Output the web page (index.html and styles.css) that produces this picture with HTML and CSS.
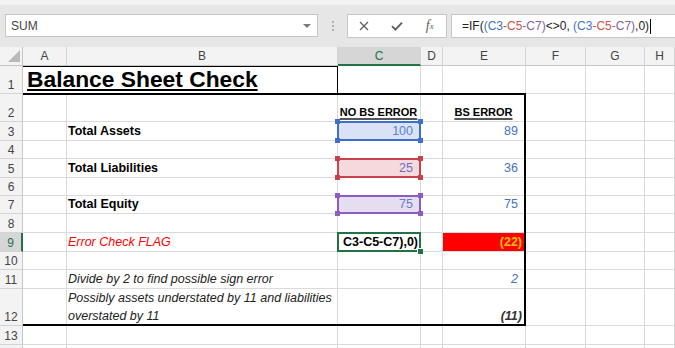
FILE: index.html
```html
<!DOCTYPE html>
<html lang="en">
  <head>
    <meta charset="UTF-8" />
    <title>Balance Sheet Check</title>
    <link rel="stylesheet" href="styles.css">
  </head>
  <body>
    <div class="top-strip"></div>
    <div class="formula-bar">
      <div class="name-box">
        <span>SUM</span>
        <span class="caret-down"></span>
      </div>
      <div class="grip"><i></i><i></i><i></i></div>
      <div class="fx-buttons">
        <span class="fx-slot">
          <svg width="10" height="10" viewBox="0 0 10 10"><path d="M1 1L9 9M9 1L1 9" stroke="#5f5f5f" stroke-width="1.3" fill="none" /></svg>
        </span>
        <span class="fx-slot">
          <svg width="12" height="10" viewBox="0 0 12 10"><path d="M1 5.2L4.4 8.6L11 1.6" stroke="#5f5f5f" stroke-width="1.9" fill="none" /></svg>
        </span>
        <span class="fx-slot fx-label">f<sub>x</sub></span>
      </div>
      <div class="formula-input">
        <span class="formula">=IF(<span class="ref-1">(C3</span><span class="ref-2">-C5</span><span class="ref-3">-C7)</span>&lt;&gt;0, <span class="ref-1">(C3</span><span class="ref-2">-C5</span><span class="ref-3">-C7)</span>,0)</span><span class="text-caret"></span>
      </div>
    </div>

    <div class="sheet">
      <div class="cells">
        <!-- header -->
        <div class="corner">
          <svg width="12" height="12" viewBox="0 0 12 12"><path d="M12 0L12 12L0 12Z" fill="#b9b9b9" /></svg>
        </div>
        <div class="col-head">A</div>
        <div class="col-head">B</div>
        <div class="col-head selected">C</div>
        <div class="col-head">D</div>
        <div class="col-head">E</div>
        <div class="col-head">F</div>
        <div class="col-head">G</div>
        <div class="col-head">H</div>

        <!-- row 1 -->
        <div class="row-head">1</div>
        <div class="cell title wide">Balance Sheet Check</div>
        <div class="cell"></div><div class="cell"></div><div class="cell"></div>
        <div class="cell"></div><div class="cell"></div><div class="cell"></div>

        <!-- row 2 -->
        <div class="row-head">2</div>
        <div class="cell"></div><div class="cell"></div>
        <div class="cell heading">NO BS ERROR</div>
        <div class="cell"></div>
        <div class="cell heading">BS ERROR</div>
        <div class="cell"></div><div class="cell"></div><div class="cell"></div>

        <!-- row 3 -->
        <div class="row-head">3</div>
        <div class="cell"></div>
        <div class="cell label">Total Assets</div>
        <div class="cell num pos range range-blue">100</div>
        <div class="cell"></div>
        <div class="cell num pos">89</div>
        <div class="cell"></div><div class="cell"></div><div class="cell"></div>

        <!-- row 4 -->
        <div class="row-head">4</div>
        <div class="cell"></div><div class="cell"></div><div class="cell"></div><div class="cell"></div>
        <div class="cell"></div><div class="cell"></div><div class="cell"></div><div class="cell"></div>

        <!-- row 5 -->
        <div class="row-head">5</div>
        <div class="cell"></div>
        <div class="cell label">Total Liabilities</div>
        <div class="cell num pos range range-red">25</div>
        <div class="cell"></div>
        <div class="cell num pos">36</div>
        <div class="cell"></div><div class="cell"></div><div class="cell"></div>

        <!-- row 6 -->
        <div class="row-head">6</div>
        <div class="cell"></div><div class="cell"></div><div class="cell"></div><div class="cell"></div>
        <div class="cell"></div><div class="cell"></div><div class="cell"></div><div class="cell"></div>

        <!-- row 7 -->
        <div class="row-head">7</div>
        <div class="cell"></div>
        <div class="cell label">Total Equity</div>
        <div class="cell num pos range range-purple">75</div>
        <div class="cell"></div>
        <div class="cell num pos">75</div>
        <div class="cell"></div><div class="cell"></div><div class="cell"></div>

        <!-- row 8 -->
        <div class="row-head">8</div>
        <div class="cell"></div><div class="cell"></div><div class="cell"></div><div class="cell"></div>
        <div class="cell"></div><div class="cell"></div><div class="cell"></div><div class="cell"></div>

        <!-- row 9 -->
        <div class="row-head selected">9</div>
        <div class="cell"></div>
        <div class="cell flag-label">Error Check FLAG</div>
        <div class="cell num active"><span>C3-C5-C7),0)</span></div>
        <div class="cell"></div>
        <div class="cell num flag">(22)</div>
        <div class="cell"></div><div class="cell"></div><div class="cell"></div>

        <!-- row 10 -->
        <div class="row-head">10</div>
        <div class="cell"></div><div class="cell"></div><div class="cell"></div><div class="cell"></div>
        <div class="cell"></div><div class="cell"></div><div class="cell"></div><div class="cell"></div>

        <!-- row 11 -->
        <div class="row-head">11</div>
        <div class="cell"></div>
        <div class="cell note">Divide by 2 to find possible sign error</div>
        <div class="cell"></div><div class="cell"></div>
        <div class="cell num pos note-num">2</div>
        <div class="cell"></div><div class="cell"></div><div class="cell"></div>

        <!-- row 12 -->
        <div class="row-head">12</div>
        <div class="cell"></div>
        <div class="cell note two-lines"><span>Possibly assets understated by 11 and liabilities<br>overstated by 11</span></div>
        <div class="cell"></div><div class="cell"></div>
        <div class="cell num neg-note">(11)</div>
        <div class="cell"></div><div class="cell"></div><div class="cell"></div>

        <!-- row 13 -->
        <div class="row-head">13</div>
        <div class="cell"></div><div class="cell"></div><div class="cell"></div><div class="cell"></div>
        <div class="cell"></div><div class="cell"></div><div class="cell"></div><div class="cell"></div>

        <!-- row 14 (only its top edge is in view) -->
        <div class="row-head"></div>
        <div class="cell"></div><div class="cell"></div><div class="cell"></div><div class="cell"></div>
        <div class="cell"></div><div class="cell"></div><div class="cell"></div><div class="cell"></div>
      </div>

      <!-- cell borders drawn on top of the grid -->
      <div class="frames">
        <div class="frame-title"></div>
        <div class="frame-main"></div>
      </div>
    </div>
  </body>
</html>
```

FILE: styles.css
```css
body {
  margin: 0;
  width: 675px;
  height: 348px;
  overflow: hidden;
  background: #fff;
  font-family: "Liberation Sans", Arial, sans-serif;
  color: #000;
}
.top-strip {
  height: 5px;
  background: #f3f3f3;
}
.formula-bar {
  height: 42px;
  box-sizing: border-box;
  padding-top: 9px;
  background: #e6e6e6;
  display: flex;
  align-items: flex-start;
}
.name-box {
  margin-left: 5px;
  width: 313px;
  height: 23px;
  box-sizing: border-box;
  background: #fff;
  border: 1px solid #c6c6c6;
  display: flex;
  align-items: center;
  justify-content: space-between;
  padding: 0 6px 0 5px;
  font-size: 12px;
  color: #444;
}
.caret-down {
  width: 0;
  height: 0;
  border-left: 4px solid transparent;
  border-right: 4px solid transparent;
  border-top: 4px solid #7a7a7a;
}
.grip {
  width: 29px;
  height: 24px;
  display: flex;
  flex-direction: column;
  align-items: center;
  justify-content: center;
  gap: 2px;
}
.grip i {
  width: 2px;
  height: 2px;
  background: #b0b0b0;
}
.fx-buttons {
  width: 100px;
  height: 24px;
  box-sizing: border-box;
  background: #fff;
  border: 1px solid #c6c6c6;
  display: flex;
  align-items: center;
}
.fx-slot {
  width: 33px;
  display: flex;
  justify-content: center;
  align-items: center;
}
.fx-label {
  font-family: "Liberation Serif", serif;
  font-style: italic;
  font-size: 14px;
  color: #5f5f5f;
}
.fx-label sub {
  font-size: 9px;
  vertical-align: -1px;
}
.formula-input {
  margin-left: 4px;
  flex: 1;
  height: 24px;
  box-sizing: border-box;
  background: #fff;
  border: 1px solid #c6c6c6;
  border-right: none;
  padding-left: 10px;
  display: flex;
  align-items: center;
  font-size: 12px;
  color: #222;
  white-space: pre;
}
.ref-1 { color: #4472c4; }
.ref-2 { color: #d0504d; }
.ref-3 { color: #8064a2; }
.text-caret {
  width: 1px;
  height: 15px;
  margin-left: 1px;
  background: #000;
}

/* sheet */
.sheet {
  display: grid;
}
.cells,
.frames {
  grid-area: 1 / 1;
  display: grid;
  grid-template-columns: 23px 44px 271px 83px 22px 83px 60px 59px 30px;
  grid-template-rows: 19px 28px 28px 19px 18px 19px 18px 18px 19px 19px 18px 19px 37px 19px 19px;
}
.frames {
  pointer-events: none;
}
.corner {
  background: #f3f3f3;
  border-right: 1px solid #c6c6c6;
  border-bottom: 1px solid #c6c6c6;
  display: flex;
  align-items: flex-end;
  justify-content: flex-end;
  padding: 0 2px 3px 0;
}
.col-head {
  background: #f3f3f3;
  border-right: 1px solid #d4d4d4;
  border-bottom: 1px solid #c6c6c6;
  display: flex;
  align-items: center;
  justify-content: center;
  font-size: 12px;
  color: #444;
}
.col-head.selected {
  background: #d6d6d6;
  border-bottom: 2px solid #217346;
  color: #217346;
}
.row-head {
  background: #f3f3f3;
  border-right: 1px solid #c6c6c6;
  border-bottom: 1px solid #d4d4d4;
  display: flex;
  align-items: flex-end;
  justify-content: center;
  padding-bottom: 0;
  font-size: 12px;
  line-height: 15px;
  color: #444;
}
.row-head.selected {
  background: #d6d6d6;
  border-right: 2px solid #217346;
  color: #217346;
}
.cell {
  border-right: 1px solid #dadada;
  border-bottom: 1px solid #dadada;
  display: flex;
  align-items: flex-end;
  padding: 0 2px 1px 1px;
  font-size: 12.5px;
  line-height: 16px;
  white-space: nowrap;
}
.wide {
  grid-column: span 2;
}
.title {
  padding-left: 4px;
  font-size: 22.8px;
  line-height: 26px;
  font-weight: bold;
  text-decoration: underline;
  text-decoration-thickness: 2px;
  text-underline-offset: 2px;
}
.heading {
  justify-content: center;
  font-size: 11px;
  font-weight: bold;
  text-decoration: underline;
  text-decoration-thickness: 2px;
  text-decoration-color: #555;
  text-underline-offset: 2px;
}
.label {
  font-weight: bold;
}
.num {
  justify-content: flex-end;
  padding-right: 3px;
  color: #4472c4;
}
.pos {
  padding-right: 7px;
}
.flag-label {
  font-style: italic;
  color: #ff0000;
}
.note {
  font-style: italic;
  color: #222;
}
.note-num {
  font-style: italic;
}
.neg-note {
  font-style: italic;
  font-weight: bold;
  color: #333;
}
.two-lines {
  line-height: 18px;
  padding-bottom: 0;
}
.flag {
  background: #ff0000;
  color: #ffc000;
  font-weight: bold;
}

/* coloured reference ranges */
.range {
  position: relative;
}
.range::before {
  content: "";
  position: absolute;
  inset: -1px;
  border: 2px solid var(--ref);
}
.range::after {
  content: "";
  position: absolute;
  inset: -3px;
  background:
    linear-gradient(var(--ref), var(--ref)) left top / 5px 5px no-repeat,
    linear-gradient(var(--ref), var(--ref)) right top / 5px 5px no-repeat,
    linear-gradient(var(--ref), var(--ref)) left bottom / 5px 5px no-repeat,
    linear-gradient(var(--ref), var(--ref)) right bottom / 5px 5px no-repeat;
}
.range-blue {
  --ref: #3f6fcc;
  background: #d9e3f5;
  color: #5b7fd6;
}
.range-red {
  --ref: #c8414b;
  background: #f5d9dc;
  color: #6a6fc0;
}
.range-purple {
  --ref: #8a5cc4;
  background: #e5def1;
  color: #6a7cd0;
}

/* active cell in edit mode */
.active {
  position: relative;
  color: #000;
  font-weight: bold;
  padding-right: 2px;
}
.active span {
  overflow: hidden;
}
.active::before {
  content: "";
  position: absolute;
  inset: -1px;
  border: 2px solid #217346;
}
.active::after {
  content: "";
  position: absolute;
  right: -3px;
  bottom: -3px;
  width: 5px;
  height: 5px;
  background: #217346;
  border-left: 1px solid #fff;
  border-top: 1px solid #fff;
}

/* outline borders */
.frame-title {
  grid-column: 2 / 4;
  grid-row: 2 / 3;
  border-top: 1px solid #000;
  border-right: 1px solid #000;
}
.frame-main {
  grid-column: 2 / 7;
  grid-row: 3 / 14;
  margin-top: -1px;
  border-top: 2px solid #000;
  border-right: 2px solid #000;
  border-bottom: 2px solid #000;
}
```
